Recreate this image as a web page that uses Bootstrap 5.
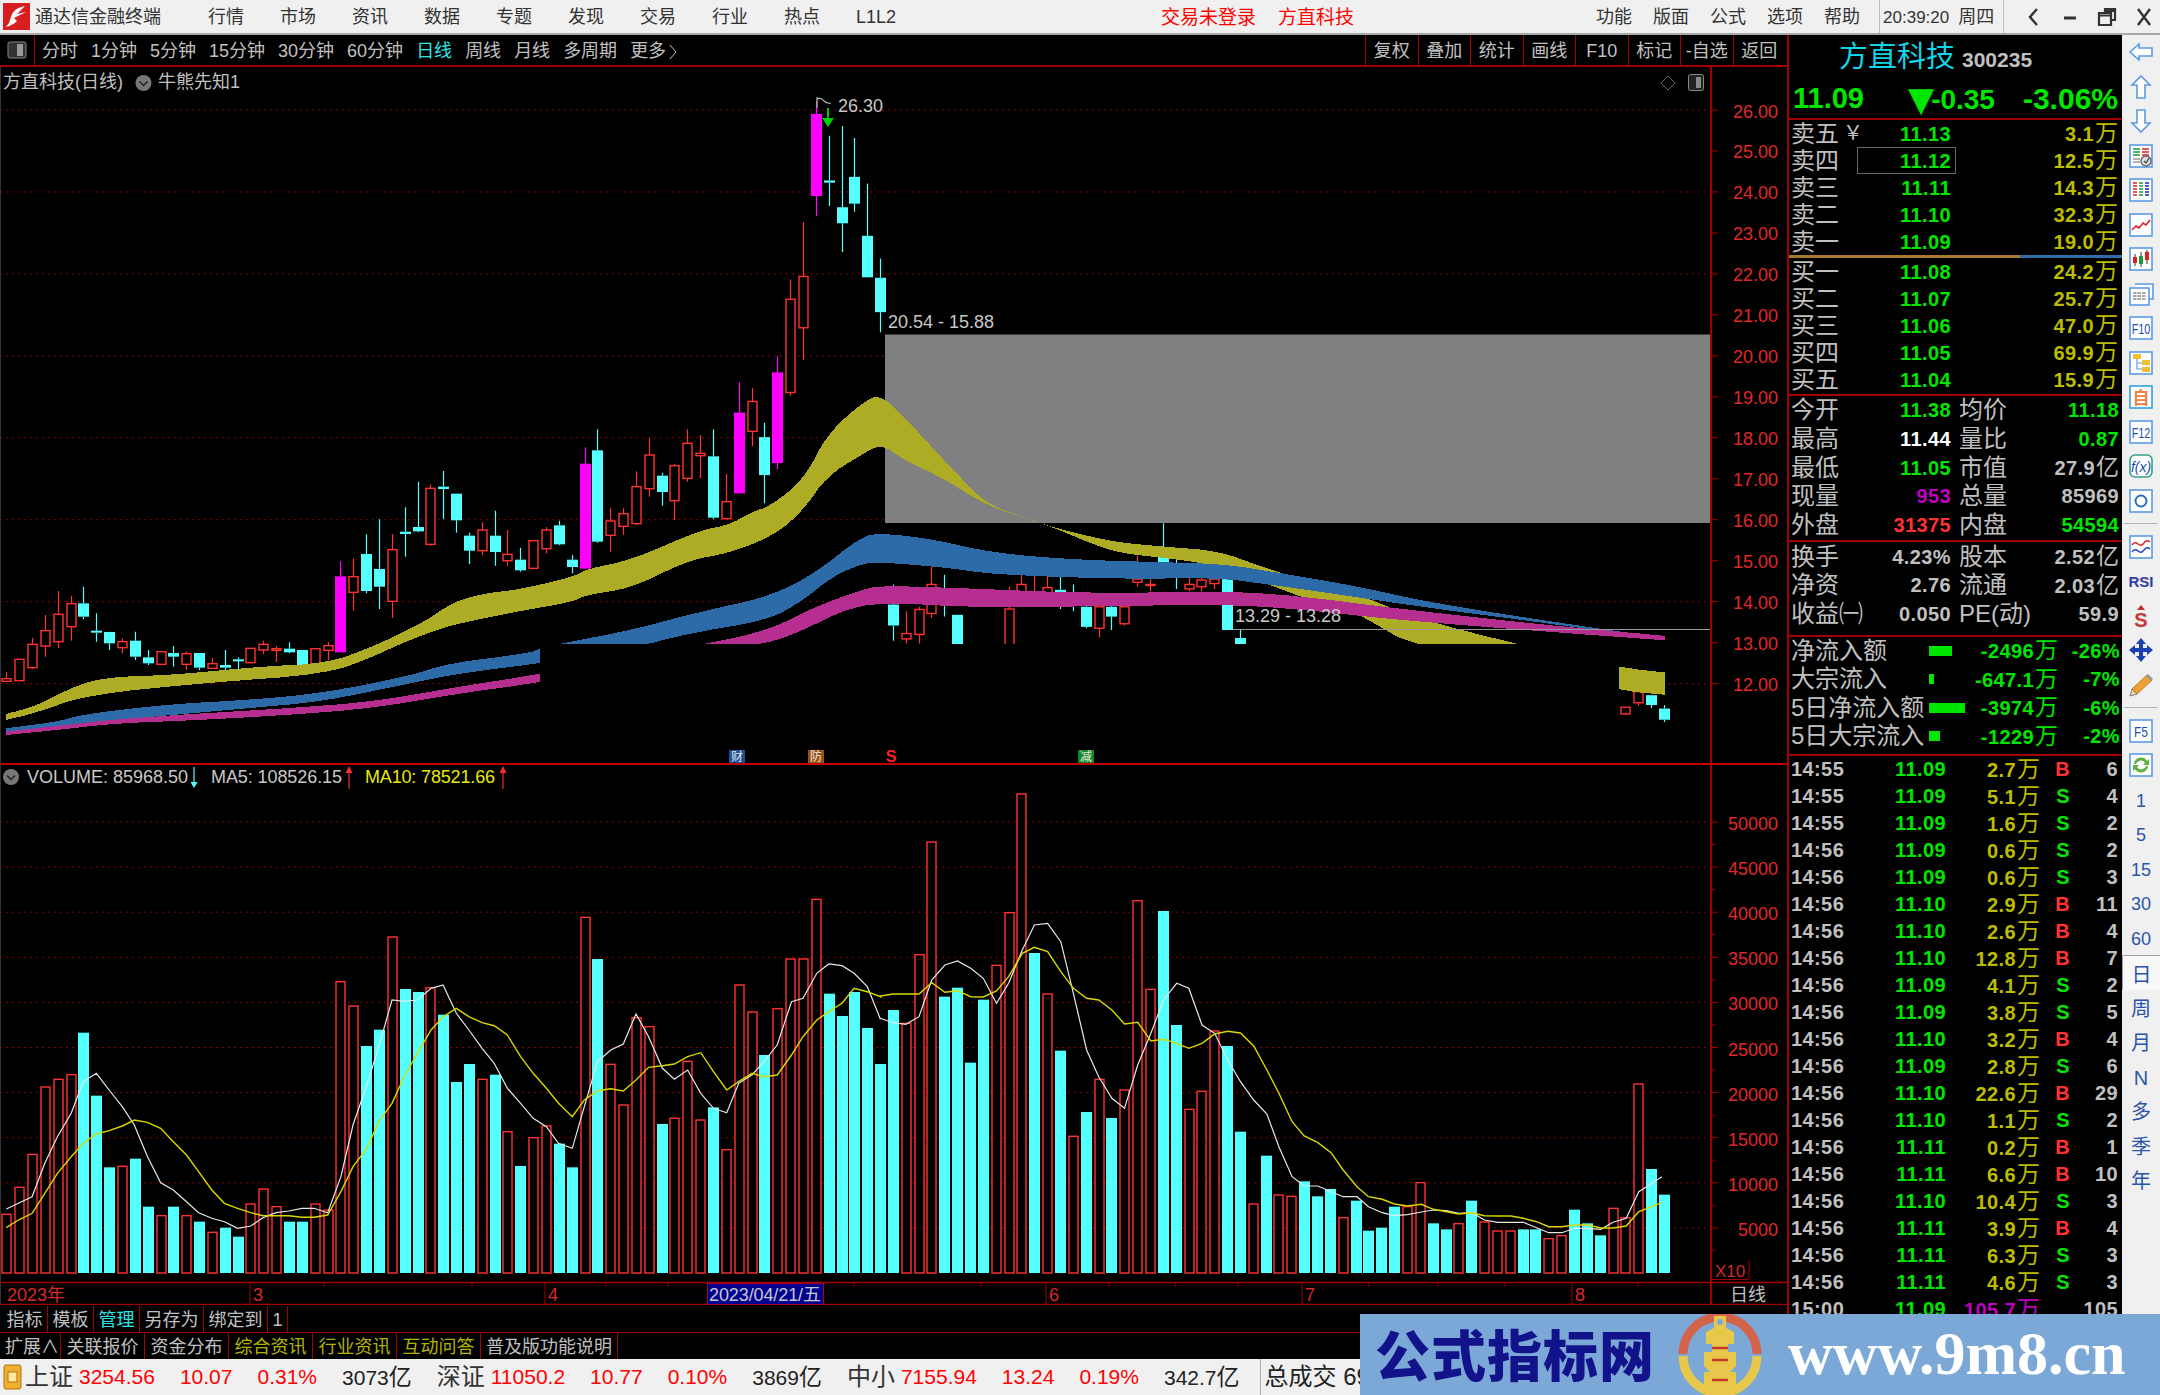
<!DOCTYPE html>
<html lang="zh-CN">
<head>
  <meta charset="UTF-8">
  <meta name="viewport" content="width=device-width, initial-scale=1">
  <title>通达信金融终端</title>
  <link href="https://cdn.jsdelivr.net/npm/bootstrap@5.3.0/dist/css/bootstrap.min.css" rel="stylesheet">
  <style>
    html, body { margin: 0; height: 1395px; width: 2160px; overflow: hidden; background: #000; }
    body, svg text { font-family: "Liberation Sans", "Noto Sans CJK SC", sans-serif; }
    .tdx-app { position: relative; width: 2160px; height: 1395px; overflow: hidden; }

    /* top title bar */
    .tdx-top { height: 35px; background: #f0f0f0; border-bottom: 2px solid #a8a8a8; font-size: 18px; color: #333; line-height: 1; }
    .tdx-top > div { padding-top: 1px; }
    .tdx-logo { margin-left: 3px; }
    .tdx-appname { margin-left: 5px; width: 126px; white-space: nowrap; }
    .tdx-menu { gap: 36px; margin-left: 47px; white-space: nowrap; }
    .tdx-menu2 { gap: 21px; margin-left: 242px; white-space: nowrap; }
    .tdx-alert { color: #f00; font-size: 19px; margin-left: 265px; gap: 22px; white-space: nowrap; }
    .tdx-clock { margin-left: 19px; border-left: 1px solid #bbb; border-right: 1px solid #bbb; width: 125px; height: 33px; padding-left: 3px; gap: 9px; white-space: nowrap; }
    .tdx-clock span:first-child { font-size: 17px; }
    .tdx-win { margin-left: 18px; gap: 15px; }

    /* main area */
    .tdx-work { height: 1360px; }
    .tdx-left { width: 1787px; height: 1324px; flex: none; }
    .tdx-tools { height: 32px; border-bottom: 2px solid #a00000; color: #c0c0c0; font-size: 18px; white-space: nowrap; }
    .tdx-tools span, .tdx-cells > div { padding-top: 3px; }
    .tdx-tabs { gap: 13px; margin-left: 7px; }
    .tdx-boxbtn { width: 35px; height: 30px; border-right: 1px solid #a00000; }
    .tdx-on { color: #2ee6e6; }
    .tdx-cells { margin-right: 2px; }
    .tdx-cells > div { width: 52.5px; height: 30px; border-left: 1px solid #a00000; }
    .tdx-chev { margin-left: 3px; }
    .tdx-chart { display: block; }
    .tdx-btnrow { height: 27px; border-bottom: 1px solid #a00000; color: #c0c0c0; font-size: 18px; padding-left: 2px; white-space: nowrap; }
    .tdx-btnrow > div { height: 26px; padding: 3px 4.5px 0; border-right: 1px solid #a00000; }
    .tdx-btnrow .tdx-c59 { width: 59px; padding-left: 3px; padding-right: 0; }
    .tdx-btnrow .tdx-c84 { width: 84px; justify-content: center; padding-left: 0; padding-right: 0; }
    .tdx-btnrow .tdx-c137 { width: 137px; justify-content: center; padding-left: 0; padding-right: 0; }
    .tdx-gap1 { margin-top: 1px; }
    .tdx-btnrow .tdx-yel { color: #b4b400; }

    /* quote panel */
    .tdx-quote { width: 335px; height: 1360px; flex: none; overflow: hidden; border-left: 2px solid #a00000; color: #c0c0c0; white-space: nowrap; line-height: 1; }
    .tdx-name { height: 44px; padding-left: 50px; gap: 7px; }
    .tdx-name b { font-weight: 400; font-size: 29px; line-height: 1; color: #10d4e8; }
    .tdx-name span { font-size: 21px; font-weight: 700; margin-top: 5px; }
    .tdx-price { height: 39px; color: #00e600; font-weight: 700; padding: 0 4px; border-bottom: 2px solid #a00000; box-sizing: content-box; }
    .tdx-price .tdx-last { font-size: 29px; width: 120px; }
    .tdx-price .tdx-chg { font-size: 28px; width: 110px; white-space: nowrap; }
    .tdx-price .tdx-tri { font-size: 34px; margin: 0 -3px 0 -5px; line-height: 1; vertical-align: -2px; font-family: "DejaVu Sans", sans-serif; }
    .tdx-price .tdx-pct { font-size: 30px; }
    .tdx-num { font-size: 20px; font-weight: 700; letter-spacing: .4px; }
    .tdx-lab { font-size: 24px; font-weight: 400; line-height: 1; }
    .tdx-wan { font-style: normal; font-size: 23px; font-weight: 400; margin-left: 1px; letter-spacing: 0; }
    .tdx-g { color: #00e600; }
    .tdx-y { color: #bcbc00; }
    .tdx-r { color: #ff3232; }
    .tdx-m { color: #c000c0; }
    .tdx-w { color: #fff; }
    .tdx-rb { height: 27px; display: grid; grid-template-columns: 58px 102px 1fr; align-items: center; padding: 0 4px 0 2px; position: relative; }
    .tdx-rb > :nth-child(2), .tdx-rb > :nth-child(3) { text-align: right; }
    .tdx-yuan { position: absolute; left: 54px; top: 3px; font-size: 20px; }
    .tdx-sel { position: absolute; left: 68px; top: 0; width: 99px; height: 27px; border: 1px solid #666; }
    .tdx-split { height: 3px; background: linear-gradient(90deg, #a87830 0, #a87830 231px, #2f6ea8 231px); }
    .tdx-hr { border-bottom: 2px solid #a00000; padding-top: 1px; }
    .tdx-hr2 { padding-top: 6px; }
    .tdx-hr3 { padding-top: 3px; }
    .tdx-rs { height: 28.7px; display: grid; grid-template-columns: 58px 102px 70px 1fr; align-items: center; padding: 0 3px 0 2px; }
    .tdx-rs > :nth-child(2), .tdx-rs > :nth-child(4) { text-align: right; }
    .tdx-rs > :nth-child(3) { padding-left: 8px; }
    .tdx-rf { height: 28.5px; display: grid; grid-template-columns: 138px 40px 89px 62px; align-items: center; padding-left: 2px; }
    .tdx-rf > :nth-child(3), .tdx-rf > :nth-child(4) { text-align: right; }
    .tdx-flowbar { display: block; height: 10px; background: #00e600; }
    .tdx-rt { height: 27px; display: grid; grid-template-columns: 52px 103px 94px 30px 48px; align-items: center; padding-left: 2px; }
    .tdx-rt > :nth-child(2), .tdx-rt > :nth-child(3), .tdx-rt > :nth-child(4), .tdx-rt > :nth-child(5) { text-align: right; }

    /* icon strip */
    .tdx-strip { width: 38px; height: 1360px; flex: none; background: #f0f0f0; color: #2a55a8; font-size: 18px; line-height: 1; }
    .tdx-ic { height: 34.5px; }
    .tdx-ic svg { display: block; }
    .tdx-it { padding-top: 2px; }
    .tdx-big { font-size: 20px; padding-top: 4px; }
    .tdx-sp { height: 11.5px; padding: 5px 2px; }
    .tdx-sp::before { content: ""; display: block; height: 1px; background: #b4b4b4; }
    .tdx-active { background: #f8f8f8; border-top: 1px solid #a0a0a0; border-left: 1px solid #a0a0a0; }

    /* bottom status bar */
    .tdx-status { position: absolute; left: 0; bottom: 0; width: 100%; height: 36px; background: #f0f0f0; color: #222; gap: 25px; padding-left: 3px; font-size: 21px; font-weight: 400; white-space: nowrap; }
    .tdx-status .tdx-sname { font-size: 24px; margin-right: -19px; color: #333; }
    .tdx-status .tdx-up { color: #f00; }
    .tdx-status em { font-style: normal; font-size: 23px; }
    .tdx-sico { margin-right: -22px; }
    .tdx-vbar { border-left: 1px solid #aaa; height: 36px; padding-left: 4px; margin-left: -5px; line-height: 36px; font-size: 24px; }

    /* watermark over the corner */
    .tdx-mark { position: absolute; right: 0; bottom: 0; width: 800px; height: 81px; background: #7ba8d6; }
    .tdx-marktxt { position: absolute; left: 15px; top: 3px; font-size: 55px; line-height: 70px; font-weight: 900; color: #12128a; letter-spacing: 1px; font-family: "Noto Sans CJK SC", sans-serif; }
    .tdx-markurl { position: absolute; left: 428px; top: 0; font-family: "Liberation Serif", serif; font-weight: 700; font-size: 62px; line-height: 78px; color: #fff; }
    .tdx-markicon { position: absolute; left: 318px; top: 0; }
  </style>
</head>
<body>
<div class="tdx-app">

  <!-- top bar -->
  <div class="tdx-top d-flex align-items-center">
    <svg class="tdx-logo" width="27" height="27" viewBox="0 0 27 27"><rect width="27" height="27" fill="#d81e1e"/><path d="M22 3 Q12 5 9 11 L6 20 L3 24 Q10 22 14 18 L11 15 L23 9 L14 11Z" fill="#fff"/></svg>
    <div class="tdx-appname">通达信金融终端</div>
    <div class="tdx-menu d-flex"><span>行情</span><span>市场</span><span>资讯</span><span>数据</span><span>专题</span><span>发现</span><span>交易</span><span>行业</span><span>热点</span><span>L1L2</span></div>
    <div class="tdx-alert d-flex"><span>交易未登录</span><span>方直科技</span></div>
    <div class="tdx-menu2 d-flex"><span>功能</span><span>版面</span><span>公式</span><span>选项</span><span>帮助</span></div>
    <div class="tdx-clock d-flex align-items-center"><span>20:39:20</span><span>周四</span></div>
    <div class="tdx-win d-flex align-items-center">
      <svg width="22" height="22" viewBox="0 0 22 22"><path d="M15 3 L8 11 L15 19" fill="none" stroke="#333" stroke-width="2.4"/></svg>
      <svg width="22" height="22" viewBox="0 0 22 22"><path d="M5 12 H17" stroke="#333" stroke-width="3"/></svg>
      <svg width="22" height="22" viewBox="0 0 22 22"><path d="M9 6 V3 H19 V14 H16 M3 7 H15 V19 H3Z M3 9.5 H15 M9 5 H19" fill="none" stroke="#333" stroke-width="2.2"/></svg>
      <svg width="22" height="22" viewBox="0 0 22 22"><path d="M5 3 L17 19 M17 3 L5 19" stroke="#333" stroke-width="2.4"/></svg>
    </div>
  </div>

  <div class="tdx-work d-flex">
    <div class="tdx-left">
      <!-- period toolbar -->
      <div class="tdx-tools d-flex align-items-center">
        <div class="tdx-boxbtn d-flex align-items-center justify-content-center">
          <svg width="20" height="18" viewBox="0 0 20 18"><rect x="1" y="1" width="18" height="16" rx="2" fill="#333" stroke="#888"/><rect x="10" y="3" width="6" height="12" fill="#999"/></svg>
        </div>
        <div class="tdx-tabs d-flex align-items-center">
          <span>分时</span><span>1分钟</span><span>5分钟</span><span>15分钟</span><span>30分钟</span><span>60分钟</span><span class="tdx-on">日线</span><span>周线</span><span>月线</span><span>多周期</span><span class="d-flex align-items-center">更多<svg class="tdx-chev" width="8" height="16" viewBox="0 0 8 16"><path d="M1 1 L7 8 L1 15" fill="none" stroke="#c0c0c0"/></svg></span>
        </div>
        <div class="tdx-cells d-flex ms-auto">
          <div class="d-flex align-items-center justify-content-center">复权</div>
          <div class="d-flex align-items-center justify-content-center">叠加</div>
          <div class="d-flex align-items-center justify-content-center">统计</div>
          <div class="d-flex align-items-center justify-content-center">画线</div>
          <div class="d-flex align-items-center justify-content-center">F10</div>
          <div class="d-flex align-items-center justify-content-center">标记</div>
          <div class="d-flex align-items-center justify-content-center">-自选</div>
          <div class="d-flex align-items-center justify-content-center">返回</div>
        </div>
      </div>

      <!-- price, volume and date canvas, filled in by the script below -->
      <svg id="chart" class="tdx-chart" width="1787" height="1238" viewBox="0 67 1787 1238" xmlns="http://www.w3.org/2000/svg"></svg>

      <div class="tdx-btnrow tdx-gap1 d-flex align-items-center">
        <div class="d-flex align-items-center">指标</div>
        <div class="d-flex align-items-center">模板</div>
        <div class="d-flex align-items-center tdx-on">管理</div>
        <div class="d-flex align-items-center">另存为</div>
        <div class="d-flex align-items-center">绑定到</div>
        <div class="d-flex align-items-center">1</div>
      </div>
      <div class="tdx-btnrow d-flex align-items-center">
        <div class="d-flex align-items-center tdx-c59">扩展∧</div>
        <div class="d-flex align-items-center tdx-c84">关联报价</div>
        <div class="d-flex align-items-center tdx-c84">资金分布</div>
        <div class="d-flex align-items-center tdx-c84 tdx-yel">综合资讯</div>
        <div class="d-flex align-items-center tdx-c84 tdx-yel">行业资讯</div>
        <div class="d-flex align-items-center tdx-c84 tdx-yel">互动问答</div>
        <div class="d-flex align-items-center tdx-c137">普及版功能说明</div>
      </div>
    </div>

    <!-- quote panel -->
    <div class="tdx-quote">
      <div class="tdx-name d-flex align-items-center"><b>方直科技</b><span>300235</span></div>
      <div class="tdx-price d-flex align-items-center">
        <span class="tdx-last">11.09</span><span class="tdx-chg"><span class="tdx-tri">▼</span>-0.35</span><span class="tdx-pct ms-auto">-3.06%</span>
      </div>

      <div class="tdx-rb"><span class="tdx-lab">卖五</span><span class="tdx-num tdx-g">11.13</span><span class="tdx-num tdx-y">3.1<i class="tdx-wan">万</i></span><span class="tdx-yuan">￥</span></div>
      <div class="tdx-rb"><span class="tdx-lab">卖四</span><span class="tdx-num tdx-g">11.12</span><span class="tdx-num tdx-y">12.5<i class="tdx-wan">万</i></span><span class="tdx-sel"></span></div>
      <div class="tdx-rb"><span class="tdx-lab">卖三</span><span class="tdx-num tdx-g">11.11</span><span class="tdx-num tdx-y">14.3<i class="tdx-wan">万</i></span></div>
      <div class="tdx-rb"><span class="tdx-lab">卖二</span><span class="tdx-num tdx-g">11.10</span><span class="tdx-num tdx-y">32.3<i class="tdx-wan">万</i></span></div>
      <div class="tdx-rb"><span class="tdx-lab">卖一</span><span class="tdx-num tdx-g">11.09</span><span class="tdx-num tdx-y">19.0<i class="tdx-wan">万</i></span></div>
      <div class="tdx-split"></div>
      <div class="tdx-rb"><span class="tdx-lab">买一</span><span class="tdx-num tdx-g">11.08</span><span class="tdx-num tdx-y">24.2<i class="tdx-wan">万</i></span></div>
      <div class="tdx-rb"><span class="tdx-lab">买二</span><span class="tdx-num tdx-g">11.07</span><span class="tdx-num tdx-y">25.7<i class="tdx-wan">万</i></span></div>
      <div class="tdx-rb"><span class="tdx-lab">买三</span><span class="tdx-num tdx-g">11.06</span><span class="tdx-num tdx-y">47.0<i class="tdx-wan">万</i></span></div>
      <div class="tdx-rb"><span class="tdx-lab">买四</span><span class="tdx-num tdx-g">11.05</span><span class="tdx-num tdx-y">69.9<i class="tdx-wan">万</i></span></div>
      <div class="tdx-rb"><span class="tdx-lab">买五</span><span class="tdx-num tdx-g">11.04</span><span class="tdx-num tdx-y">15.9<i class="tdx-wan">万</i></span></div>
      <div class="tdx-hr"></div>

      <div class="tdx-rs"><span class="tdx-lab">今开</span><span class="tdx-num tdx-g">11.38</span><span class="tdx-lab">均价</span><span class="tdx-num tdx-g">11.18</span></div>
      <div class="tdx-rs"><span class="tdx-lab">最高</span><span class="tdx-num tdx-w">11.44</span><span class="tdx-lab">量比</span><span class="tdx-num tdx-g">0.87</span></div>
      <div class="tdx-rs"><span class="tdx-lab">最低</span><span class="tdx-num tdx-g">11.05</span><span class="tdx-lab">市值</span><span class="tdx-num">27.9<i class="tdx-wan">亿</i></span></div>
      <div class="tdx-rs"><span class="tdx-lab">现量</span><span class="tdx-num tdx-m">953</span><span class="tdx-lab">总量</span><span class="tdx-num">85969</span></div>
      <div class="tdx-rs"><span class="tdx-lab">外盘</span><span class="tdx-num tdx-r">31375</span><span class="tdx-lab">内盘</span><span class="tdx-num tdx-g">54594</span></div>
      <div class="tdx-hr"></div>
      <div class="tdx-rs"><span class="tdx-lab">换手</span><span class="tdx-num">4.23%</span><span class="tdx-lab">股本</span><span class="tdx-num">2.52<i class="tdx-wan">亿</i></span></div>
      <div class="tdx-rs"><span class="tdx-lab">净资</span><span class="tdx-num">2.76</span><span class="tdx-lab">流通</span><span class="tdx-num">2.03<i class="tdx-wan">亿</i></span></div>
      <div class="tdx-rs"><span class="tdx-lab">收益㈠</span><span class="tdx-num">0.050</span><span class="tdx-lab">PE(动)</span><span class="tdx-num">59.9</span></div>
      <div class="tdx-hr tdx-hr2"></div>

      <div class="tdx-rf"><span class="tdx-lab">净流入额</span><span><span class="tdx-flowbar" style="width:23px"></span></span><span class="tdx-num tdx-g">-2496<i class="tdx-wan">万</i></span><span class="tdx-num tdx-g">-26%</span></div>
      <div class="tdx-rf"><span class="tdx-lab">大宗流入</span><span><span class="tdx-flowbar" style="width:5px"></span></span><span class="tdx-num tdx-g">-647.1<i class="tdx-wan">万</i></span><span class="tdx-num tdx-g">-7%</span></div>
      <div class="tdx-rf"><span class="tdx-lab">5日净流入额</span><span><span class="tdx-flowbar" style="width:36px"></span></span><span class="tdx-num tdx-g">-3974<i class="tdx-wan">万</i></span><span class="tdx-num tdx-g">-6%</span></div>
      <div class="tdx-rf"><span class="tdx-lab">5日大宗流入</span><span><span class="tdx-flowbar" style="width:11px"></span></span><span class="tdx-num tdx-g">-1229<i class="tdx-wan">万</i></span><span class="tdx-num tdx-g">-2%</span></div>
      <div class="tdx-hr tdx-hr3"></div>

      <div class="tdx-rt tdx-num"><span>14:55</span><span class="tdx-g">11.09</span><span class="tdx-y">2.7<i class="tdx-wan">万</i></span><span class="tdx-r">B</span><span>6</span></div>
      <div class="tdx-rt tdx-num"><span>14:55</span><span class="tdx-g">11.09</span><span class="tdx-y">5.1<i class="tdx-wan">万</i></span><span class="tdx-g">S</span><span>4</span></div>
      <div class="tdx-rt tdx-num"><span>14:55</span><span class="tdx-g">11.09</span><span class="tdx-y">1.6<i class="tdx-wan">万</i></span><span class="tdx-g">S</span><span>2</span></div>
      <div class="tdx-rt tdx-num"><span>14:56</span><span class="tdx-g">11.09</span><span class="tdx-y">0.6<i class="tdx-wan">万</i></span><span class="tdx-g">S</span><span>2</span></div>
      <div class="tdx-rt tdx-num"><span>14:56</span><span class="tdx-g">11.09</span><span class="tdx-y">0.6<i class="tdx-wan">万</i></span><span class="tdx-g">S</span><span>3</span></div>
      <div class="tdx-rt tdx-num"><span>14:56</span><span class="tdx-g">11.10</span><span class="tdx-y">2.9<i class="tdx-wan">万</i></span><span class="tdx-r">B</span><span>11</span></div>
      <div class="tdx-rt tdx-num"><span>14:56</span><span class="tdx-g">11.10</span><span class="tdx-y">2.6<i class="tdx-wan">万</i></span><span class="tdx-r">B</span><span>4</span></div>
      <div class="tdx-rt tdx-num"><span>14:56</span><span class="tdx-g">11.10</span><span class="tdx-y">12.8<i class="tdx-wan">万</i></span><span class="tdx-r">B</span><span>7</span></div>
      <div class="tdx-rt tdx-num"><span>14:56</span><span class="tdx-g">11.09</span><span class="tdx-y">4.1<i class="tdx-wan">万</i></span><span class="tdx-g">S</span><span>2</span></div>
      <div class="tdx-rt tdx-num"><span>14:56</span><span class="tdx-g">11.09</span><span class="tdx-y">3.8<i class="tdx-wan">万</i></span><span class="tdx-g">S</span><span>5</span></div>
      <div class="tdx-rt tdx-num"><span>14:56</span><span class="tdx-g">11.10</span><span class="tdx-y">3.2<i class="tdx-wan">万</i></span><span class="tdx-r">B</span><span>4</span></div>
      <div class="tdx-rt tdx-num"><span>14:56</span><span class="tdx-g">11.09</span><span class="tdx-y">2.8<i class="tdx-wan">万</i></span><span class="tdx-g">S</span><span>6</span></div>
      <div class="tdx-rt tdx-num"><span>14:56</span><span class="tdx-g">11.10</span><span class="tdx-y">22.6<i class="tdx-wan">万</i></span><span class="tdx-r">B</span><span>29</span></div>
      <div class="tdx-rt tdx-num"><span>14:56</span><span class="tdx-g">11.10</span><span class="tdx-y">1.1<i class="tdx-wan">万</i></span><span class="tdx-g">S</span><span>2</span></div>
      <div class="tdx-rt tdx-num"><span>14:56</span><span class="tdx-g">11.11</span><span class="tdx-y">0.2<i class="tdx-wan">万</i></span><span class="tdx-r">B</span><span>1</span></div>
      <div class="tdx-rt tdx-num"><span>14:56</span><span class="tdx-g">11.11</span><span class="tdx-y">6.6<i class="tdx-wan">万</i></span><span class="tdx-r">B</span><span>10</span></div>
      <div class="tdx-rt tdx-num"><span>14:56</span><span class="tdx-g">11.10</span><span class="tdx-y">10.4<i class="tdx-wan">万</i></span><span class="tdx-g">S</span><span>3</span></div>
      <div class="tdx-rt tdx-num"><span>14:56</span><span class="tdx-g">11.11</span><span class="tdx-y">3.9<i class="tdx-wan">万</i></span><span class="tdx-r">B</span><span>4</span></div>
      <div class="tdx-rt tdx-num"><span>14:56</span><span class="tdx-g">11.11</span><span class="tdx-y">6.3<i class="tdx-wan">万</i></span><span class="tdx-g">S</span><span>3</span></div>
      <div class="tdx-rt tdx-num"><span>14:56</span><span class="tdx-g">11.11</span><span class="tdx-y">4.6<i class="tdx-wan">万</i></span><span class="tdx-g">S</span><span>3</span></div>
      <div class="tdx-rt tdx-num"><span>15:00</span><span class="tdx-g">11.09</span><span class="tdx-m">105.7<i class="tdx-wan">万</i></span><span></span><span>105</span></div>
    </div>

    <!-- right icon strip -->
    <div class="tdx-strip d-flex flex-column">
      <div class="tdx-ic d-flex align-items-center justify-content-center"><svg width="28" height="28" viewBox="0 0 28 28"><path d="M3 14 L12 6 V10 H25 V18 H12 V22Z" fill="#fff" stroke="#5b9be8" stroke-width="1.6"/></svg></div>
      <div class="tdx-ic d-flex align-items-center justify-content-center"><svg width="28" height="28" viewBox="0 0 28 28"><path d="M14 3 L23 12 H18 V25 H10 V12 H5Z" fill="#fff" stroke="#5b9be8" stroke-width="1.6"/></svg></div>
      <div class="tdx-ic d-flex align-items-center justify-content-center"><svg width="28" height="28" viewBox="0 0 28 28"><path d="M14 25 L23 16 H18 V3 H10 V16 H5Z" fill="#fff" stroke="#5b9be8" stroke-width="1.6"/></svg></div>
      <div class="tdx-ic d-flex align-items-center justify-content-center"><svg width="28" height="28" viewBox="0 0 28 28"><rect x="3" y="3" width="22" height="22" fill="#fff" stroke="#5b9be8" stroke-width="1.6"/><path d="M6 7 H13 M6 10 H13 M6 13 H13" stroke="#1a9a3a" stroke-width="1.6"/><path d="M15 7 H22 M15 10 H22 M15 13 H22" stroke="#e02020" stroke-width="1.6"/><path d="M6 17 H13 M6 20 H13" stroke="#999" stroke-width="1.6"/><circle cx="19" cy="19" r="5" fill="#ddd" stroke="#666" stroke-width="1.4"/><path d="M17 19 L19 21 L22 16" fill="none" stroke="#444" stroke-width="1.2"/></svg></div>
      <div class="tdx-ic d-flex align-items-center justify-content-center"><svg width="28" height="28" viewBox="0 0 28 28"><rect x="3" y="3" width="22" height="22" fill="#fff" stroke="#5b9be8" stroke-width="1.6"/><path d="M6 7 H10 M6 10 H10 M6 13 H10 M6 16 H10 M6 19 H10" stroke="#e02020" stroke-width="1.6"/><path d="M12 7 H16 M12 10 H16 M12 13 H16 M12 16 H16 M12 19 H16" stroke="#1a9a3a" stroke-width="1.6"/><path d="M18 7 H22 M18 10 H22 M18 13 H22 M18 16 H22 M18 19 H22" stroke="#2020d0" stroke-width="1.6"/></svg></div>
      <div class="tdx-ic d-flex align-items-center justify-content-center"><svg width="28" height="28" viewBox="0 0 28 28"><rect x="3" y="3" width="22" height="22" fill="#fff" stroke="#5b9be8" stroke-width="1.6"/><path d="M5 19 L9 15 L12 17 L16 12 L19 14 L23 9" fill="none" stroke="#e02020" stroke-width="1.6"/></svg></div>
      <div class="tdx-ic d-flex align-items-center justify-content-center"><svg width="28" height="28" viewBox="0 0 28 28"><rect x="3" y="3" width="22" height="22" fill="#fff" stroke="#5b9be8" stroke-width="1.6"/><path d="M8 9 V21 M14 7 V22 M20 5 V19" stroke="#333" stroke-width="1"/><rect x="6" y="12" width="4" height="6" fill="#e02020"/><rect x="12" y="11" width="4" height="8" fill="#1a9a3a"/><rect x="18" y="7" width="4" height="8" fill="#e02020"/></svg></div>
      <div class="tdx-ic d-flex align-items-center justify-content-center"><svg width="28" height="28" viewBox="0 0 28 28"><path d="M8 4 H26 V19 H22" fill="#fff" stroke="#5b9be8" stroke-width="1.6"/><rect x="3" y="8" width="19" height="17" fill="#fff" stroke="#5b9be8" stroke-width="1.6"/><path d="M6 13 H19 M6 16 H19 M6 19 H19" stroke="#888" stroke-width="1.6" stroke-dasharray="3.5 1"/></svg></div>
      <div class="tdx-ic d-flex align-items-center justify-content-center"><svg width="28" height="28" viewBox="0 0 28 28"><rect x="3" y="3" width="22" height="22" fill="#fff" stroke="#5b9be8" stroke-width="1.6"/><text transform="translate(14 20) scale(.72 1)" text-anchor="middle" font-size="15" fill="#2050b0">F10</text></svg></div>
      <div class="tdx-ic d-flex align-items-center justify-content-center"><svg width="28" height="28" viewBox="0 0 28 28"><rect x="3" y="3" width="22" height="22" fill="#fff" stroke="#5b9be8" stroke-width="1.6"/><path d="M10 9 V20 H15 M10 14 H15" fill="none" stroke="#5b9be8" stroke-width="1.2"/><rect x="6" y="5" width="8" height="5" fill="#f0c030"/><rect x="15" y="11" width="8" height="5" fill="#f0c030"/><rect x="15" y="18" width="8" height="5" fill="#f0c030"/></svg></div>
      <div class="tdx-ic d-flex align-items-center justify-content-center"><svg width="28" height="28" viewBox="0 0 28 28"><rect x="3" y="3" width="22" height="22" fill="#fff" stroke="#30a0e0" stroke-width="1.6"/><text x="14" y="21" text-anchor="middle" font-size="17" font-weight="700" fill="#f08040">自</text></svg></div>
      <div class="tdx-ic d-flex align-items-center justify-content-center"><svg width="28" height="28" viewBox="0 0 28 28"><rect x="3" y="3" width="22" height="22" fill="#fff" stroke="#5b9be8" stroke-width="1.6"/><text transform="translate(14 20) scale(.72 1)" text-anchor="middle" font-size="15" fill="#2050b0">F12</text></svg></div>
      <div class="tdx-ic d-flex align-items-center justify-content-center"><svg width="28" height="28" viewBox="0 0 28 28"><rect x="3" y="3" width="22" height="22" rx="5" fill="#fff" stroke="#30a090" stroke-width="1.6"/><text x="14" y="20" text-anchor="middle" font-size="14" font-style="italic" fill="#2050b0">f(x)</text></svg></div>
      <div class="tdx-ic d-flex align-items-center justify-content-center"><svg width="28" height="28" viewBox="0 0 28 28"><rect x="3" y="3" width="22" height="22" fill="#fff" stroke="#5b9be8" stroke-width="1.6"/><circle cx="14" cy="14" r="5.5" fill="none" stroke="#2a70c0" stroke-width="2"/></svg></div>
      <div class="tdx-sp"></div>
      <div class="tdx-ic d-flex align-items-center justify-content-center"><svg width="28" height="28" viewBox="0 0 28 28"><rect x="3" y="3" width="22" height="22" fill="#fff" stroke="#5b9be8" stroke-width="1.6"/><path d="M5 12 Q8 8 11 11 T17 10 T23 9" fill="none" stroke="#e02020" stroke-width="1.4"/><path d="M5 19 Q8 15 11 18 T17 17 T23 16" fill="none" stroke="#2040d0" stroke-width="1.4"/></svg></div>
      <div class="tdx-ic d-flex align-items-center justify-content-center"><svg width="28" height="28" viewBox="0 0 28 28"><text x="14" y="20" text-anchor="middle" font-size="15" font-weight="700" fill="#2a40a8">RSI</text><path d="M4 12 H24" stroke="#d04040" stroke-width=".8" opacity=".5"/></svg></div>
      <div class="tdx-ic d-flex align-items-center justify-content-center"><svg width="28" height="28" viewBox="0 0 28 28"><path d="M14 3 L18 8 H10Z" fill="#c03030"/><text x="14" y="25" text-anchor="middle" font-size="20" font-weight="700" fill="#d03030" stroke="#999" stroke-width=".3">S</text></svg></div>
      <div class="tdx-ic d-flex align-items-center justify-content-center"><svg width="28" height="28" viewBox="0 0 28 28"><path d="M14 2 L19 8 H16 V12 H20 V9 L26 14 L20 19 V16 H16 V20 H19 L14 26 L9 20 H12 V16 H8 V19 L2 14 L8 9 V12 H12 V8 H9Z" fill="#1a3fb0"/></svg></div>
      <div class="tdx-ic d-flex align-items-center justify-content-center"><svg width="28" height="28" viewBox="0 0 28 28"><path d="M20 4 L25 9 L10 23 L5 18Z" fill="#f0a030" stroke="#a06a10" stroke-width=".8"/><path d="M5 18 L3 25 L10 23Z" fill="#e8d8b0" stroke="#666" stroke-width=".8"/><path d="M20 4 L25 9" stroke="#999" stroke-width="3"/></svg></div>
      <div class="tdx-sp"></div>
      <div class="tdx-ic d-flex align-items-center justify-content-center"><svg width="28" height="28" viewBox="0 0 28 28"><rect x="3" y="3" width="22" height="22" fill="#fff" stroke="#5b9be8" stroke-width="1.6"/><text transform="translate(14 20) scale(.8 1)" text-anchor="middle" font-size="15" fill="#2050b0">F5</text></svg></div>
      <div class="tdx-ic d-flex align-items-center justify-content-center"><svg width="28" height="28" viewBox="0 0 28 28"><rect x="3" y="3" width="22" height="22" fill="#fff" stroke="#5b9be8" stroke-width="1.6"/><path d="M7 13 A7 7 0 0 1 20 10 L22 8 V14 H16 L18 12 A5 5 0 0 0 9 13Z M21 15 A7 7 0 0 1 8 18 L6 20 V14 H12 L10 16 A5 5 0 0 0 19 15Z" fill="#60b040"/></svg></div>
      <div class="tdx-ic tdx-it d-flex align-items-center justify-content-center">1</div>
      <div class="tdx-ic tdx-it d-flex align-items-center justify-content-center">5</div>
      <div class="tdx-ic tdx-it d-flex align-items-center justify-content-center">15</div>
      <div class="tdx-ic tdx-it d-flex align-items-center justify-content-center">30</div>
      <div class="tdx-ic tdx-it d-flex align-items-center justify-content-center">60</div>
      <div class="tdx-ic tdx-big tdx-active d-flex align-items-center justify-content-center">日</div>
      <div class="tdx-ic tdx-big d-flex align-items-center justify-content-center">周</div>
      <div class="tdx-ic tdx-big d-flex align-items-center justify-content-center">月</div>
      <div class="tdx-ic tdx-big d-flex align-items-center justify-content-center">N</div>
      <div class="tdx-ic tdx-big d-flex align-items-center justify-content-center">多</div>
      <div class="tdx-ic tdx-big d-flex align-items-center justify-content-center">季</div>
      <div class="tdx-ic tdx-big d-flex align-items-center justify-content-center">年</div>
    </div>
  </div>

  <!-- status bar -->
  <div class="tdx-status d-flex align-items-center">
    <svg class="tdx-sico" width="19" height="26" viewBox="0 0 19 26"><rect x="1" y="1" width="17" height="24" rx="2" fill="#f0b030" stroke="#b07010"/><rect x="5" y="8" width="9" height="10" fill="#ffe8a0" stroke="#b07010"/></svg>
    <span class="tdx-sname">上证</span><span class="tdx-up">3254.56</span><span class="tdx-up">10.07</span><span class="tdx-up">0.31%</span><span>3073<em>亿</em></span>
    <span class="tdx-sname">深证</span><span class="tdx-up">11050.2</span><span class="tdx-up">10.77</span><span class="tdx-up">0.10%</span><span>3869<em>亿</em></span>
    <span class="tdx-sname">中小</span><span class="tdx-up">7155.94</span><span class="tdx-up">13.24</span><span class="tdx-up">0.19%</span><span>342.7<em>亿</em></span>
    <span class="tdx-vbar">总成交 6904亿</span>
  </div>

  <!-- watermark -->
  <div class="tdx-mark">
    <div class="tdx-marktxt">公式指标网</div>
    <svg class="tdx-markicon" width="84" height="81" viewBox="0 0 84 81">
      <path d="M5 40 A37 37 0 0 1 79 40" fill="none" stroke="#d4634c" stroke-width="9"/>
      <path d="M79 42 A37 37 0 0 1 5 42" fill="none" stroke="#e8c84a" stroke-width="9"/>
      <path d="M36 2 H48 V14 L56 18 V30 H50 V38 H58 V52 L52 58 H58 V78 H26 V58 H32 L26 52 V38 H34 V30 H28 V18 L36 14Z" fill="#e8c84a"/>
      <circle cx="42" cy="8" r="3" fill="#7ba8d6"/>
      <path d="M34 34 H50 M34 46 H50 M34 66 H50" stroke="#c23a2a" stroke-width="2.5"/>
    </svg>
    <div class="tdx-markurl">www.9m8.cn</div>
  </div>
</div>

<script>
  // everything in the svg uses page coordinates (viewBox starts at y=67)
  const svgEl = document.getElementById('chart');
  let out = '';

  const RED = '#ff3232', CYAN = '#54ffff', MAG = '#ff00ff', AX = '#a00000', DOT = '#8a0000';
  const barX = i => 6.3 + 12.85 * i;
  const priceY = p => 110 + (26 - p) * 40.97;
  // crops the numbers were read from
  const z8 = v => 400 + v / 3;
  const z9 = v => 80 + v / 2.24;
  const z10 = v => 760 + v / 3;

  function text(x, y, s, col, size, anchor) {
    return `<text x="${x}" y="${y}" fill="${col}" font-size="${size || 18}" text-anchor="${anchor || 'start'}" dominant-baseline="central">${s}</text>`;
  }
  function candle(i, type, hi, top, bot, lo) {
    const x = Math.round(barX(i));
    const col = type === 'r' ? RED : type === 'c' ? CYAN : MAG;
    let s = `<path d="M${x + .5} ${hi} V${top} M${x + .5} ${bot} V${lo}" stroke="${col}" stroke-width="1.2"/>`;
    if (type === 'r') s += `<rect x="${x - 4}" y="${top}" width="9" height="${Math.max(bot - top, 1)}" fill="#000" stroke="${col}" stroke-width="1.4"/>`;
    else s += `<rect x="${x - 5}" y="${top}" width="11" height="${Math.max(bot - top, 2)}" fill="${col}"/>`;
    return s;
  }

  // [type, high, top, bottom, low] read from the left half of the chart
  const leftCandles = [
    ['r',816,836,844,844],['r',778,778,842,842],['r',713,733,803,806],['r',645,692,738,770],['r',573,643,725,745],
    ['r',587,611,680,722],['c',560,610,650,658],['c',640,692,698,725],['c',695,696,730,750],['r',715,725,743,760],
    ['c',695,722,770,780],['c',750,772,790,795],['r',755,755,793,795],['c',738,759,770,800],['r',755,761,793,810],
    ['c',759,759,803,810],['r',775,791,805,806],['c',750,795,803,810],['c',772,778,782,808],['r',745,745,788,790],
    ['r',722,733,750,762],['r',738,746,751,786],['c',727,746,757,760],['c',750,750,795,795],['r',746,746,795,795],
    ['r',727,737,751,780],['m',484,529,757,757],['r',475,530,577,632],['c',403,462,573,580],['c',358,507,560,627],
    ['r',403,449,604,654],['c',322,395,402,470],['c',245,381,394,397],['r',253,265,433,438],['c',213,260,267,358],
    ['c',281,281,361,398],['c',398,407,452,492],['r',367,390,452,465],['c',332,407,456,497],['r',390,463,482,497],
    ['c',443,479,511,515],['r',422,422,505,508],['r',382,390,446,460],['c',362,376,433,436],['c',465,479,501,520],
    ['m',142,191,506,506],['c',88,151,425,428],['r',325,363,406,455],['r',325,341,379,405],['r',214,260,371,375],
    ['r',115,165,266,290],['c',218,227,276,317],['r',192,197,302,360],['r',88,130,235,245],['r',105,160,167,235],
    ['c',88,169,353,358],['r',222,305,356,358]
  ];
  // [index, type, high, top, bottom, low] read from the right half
  const rightCandles = [
    [57,'m',677,745,926,926],[58,'r',690,720,787,820],[59,'c',768,800,885,948],[60,'m',618,655,858,872],[61,'r',447,491,700,707],
    [62,'r',318,440,555,628],[63,'m',47,76,260,305],[64,'c',125,225,230,282],[65,'c',103,285,321,385],[66,'c',130,217,277,295],
    [67,'c',232,349,442,442],[68,'c',400,443,520,565],[69,'c',1130,1175,1222,1256],[70,'r',1190,1240,1252,1262],[71,'r',1180,1186,1242,1262],
    [72,'r',1090,1130,1195,1205],[73,'c',1108,1170,1172,1202],[74,'c',1198,1198,1270,1270],[78,'r',1135,1185,1270,1270],[79,'r',1108,1130,1150,1150],
    [80,'r',1110,1150,1151,1180],[81,'r',1110,1137,1150,1150],[82,'c',1110,1142,1150,1185],[83,'c',1130,1150,1152,1190],[84,'c',1150,1180,1225,1228],
    [85,'r',1150,1180,1228,1248],[86,'c',1150,1180,1202,1232],[87,'r',1150,1180,1218,1222],[88,'r',1065,1118,1125,1135],[89,'r',1110,1130,1131,1145],
    [90,'c',993,1065,1080,1090],[91,'c',1075,1100,1102,1140],[92,'r',1100,1130,1140,1145],[93,'r',1100,1120,1135,1145],[94,'r',1090,1118,1128,1140],
    [95,'c',1118,1118,1232,1232],[96,'c',1232,1250,1275,1275],[126,'r',1405,1405,1420,1422],[127,'r',1370,1370,1395,1402],[128,'c',1378,1378,1400,1407],
    [129,'c',1400,1408,1433,1438]
  ];

  // gridlines and axis of the price pane
  for (let p = 12; p <= 26; p += 2) out += `<path d="M0 ${priceY(p)} H1711" stroke="${DOT}" stroke-dasharray="2 4"/>`;
  leftCandles.forEach((c, i) => { out += candle(i, c[0], z8(c[1]), z8(c[2]), z8(c[3]), z8(c[4])); });
  rightCandles.forEach(c => { out += candle(c[0], c[1], z9(c[2]), z9(c[3]), z9(c[4]), z9(c[5])); });

  // gap box
  out += `<rect x="885" y="334.5" width="826" height="188.5" fill="#808080"/>`;

  // rounds the corners of an edge, the ribbons are drawn smooth in the original
  function chaikin(pts) {
    const res = [pts[0]];
    for (let i = 0; i < pts.length - 1; i++) {
      const a = pts[i], b = pts[i + 1];
      res.push([a[0] * .75 + b[0] * .25, a[1] * .75 + b[1] * .25], [a[0] * .25 + b[0] * .75, a[1] * .25 + b[1] * .75]);
    }
    res.push(pts[pts.length - 1]);
    return res;
  }
  // moving average ribbons: top edge then bottom edge, from the two crops
  function ribbon(topL, topR, botL, botR, col) {
    const l = a => a.map(p => [p[0] * 900 / 1568, z8(p[1])]);
    const r = a => a.map(p => [700 + p[0] / 1.4255, z9(p[1])]);
    const top = chaikin(chaikin(l(topL).concat(r(topR))));
    const bot = chaikin(chaikin(l(botL).concat(r(botR))));
    const pts = top.concat(bot.reverse());
    return `<polygon points="${pts.map(p => p[0].toFixed(1) + ',' + p[1].toFixed(1)).join(' ')}" fill="${col}" shape-rendering="crispEdges"/>`;
  }
  out += ribbon(
    [[10,942],[60,920],[140,850],[200,830],[300,825],[450,800],[570,790],[650,740],[740,665],[790,605],[850,578],[900,570],[1000,530],[1020,508],[1100,480],[1220,390],[1270,375],[1310,335],[1340,320],[1400,240],[1440,105],[1500,10]],
    [[258,703],[300,770],[335,830],[380,905],[410,950],[470,985],[510,1005],[590,1035],[660,1045],[740,1055],[800,1090],[850,1115],[900,1130],[950,1160],[1020,1205],[1160,1262],[1311,1316],[1375,1327]],
    [[10,960],[60,940],[150,885],[350,850],[570,822],[650,770],[700,730],[760,690],[800,670],[900,635],[1000,605],[1020,585],[1100,565],[1200,480],[1270,460],[1350,405],[1400,330],[1440,230],[1500,165]],
    [[258,815],[290,850],[330,880],[360,905],[400,945],[440,970],[500,1000],[560,1040],[600,1060],[660,1070],[730,1085],[780,1110],[810,1130],[870,1165],[930,1190],[970,1225],[1010,1262],[1311,1368],[1375,1377]],
    '#adac24');
  out += ribbon(
    [[10,985],[100,965],[140,945],[230,925],[320,910],[430,900],[560,880],[720,825],[780,790],[920,760],[941,745],[980,730],[1100,690],[1220,635],[1340,590],[1420,520],[1500,410]],
    [[258,1015],[330,1028],[420,1060],[540,1075],[660,1080],[750,1085],[830,1105],[940,1135],[1040,1170],[1200,1210],[1375,1250]],
    [[10,1000],[100,980],[200,960],[300,945],[430,925],[560,905],[700,855],[800,820],[941,790],[1100,745],[1200,700],[1340,660],[1400,600],[1450,530],[1500,492]],
    [[258,1080],[350,1092],[420,1108],[600,1118],[740,1115],[810,1130],[900,1150],[1050,1185],[1200,1215],[1375,1255]],
    '#2d6aa8');
  out += ribbon(
    [[10,995],[100,978],[200,958],[350,940],[500,925],[650,905],[800,860],[941,822],[1230,732],[1340,690],[1420,620],[1500,570]],
    [[258,1132],[400,1140],[560,1150],[750,1145],[850,1155],[1000,1185],[1200,1220],[1375,1245]],
    [[10,1005],[100,990],[200,970],[350,960],[500,945],[650,925],[800,880],[941,848],[1200,760],[1340,730],[1400,690],[1470,630]],
    [[258,1170],[400,1182],[600,1178],[750,1175],[850,1185],[1000,1210],[1200,1235],[1375,1255]],
    '#b62e8f');

  // the black block the indicator paints over the lower part
  out += `<rect x="540" y="644" width="1079" height="119" fill="#000"/>`;

  // annotations of the price pane
  out += `<path d="M1233 629.5 H1711" stroke="#999"/>`;
  out += text(888, 322, '20.54 - 15.88', '#c8c8c8', 18);
  out += text(1235, 616, '13.29 - 13.28', '#c8c8c8', 18);
  out += text(838, 106, '26.30', '#c8c8c8', 18);
  out += `<path d="M817 108 V97 M817 99 q4 -2 7 2 q3 3 7 2" fill="none" stroke="#bbb" stroke-width="1.2"/>`;
  out += `<path d="M828 108 V118" stroke="#00c000" stroke-width="2"/><path d="M822 118 H834 L828 127Z" fill="#00d000"/>`;

  // small event tags
  [[737,'财','#1d4f96'],[816,'防','#9a5010'],[1086,'减','#108a20']].forEach(t => {
    out += `<rect x="${t[0] - 8}" y="750" width="16" height="13" fill="${t[2]}"/>`;
    out += text(t[0], 756.5, t[1], '#e8e8e8', 12, 'middle');
  });
  out += `<text x="891" y="762" fill="#ff2020" font-size="16" font-weight="700" text-anchor="middle">S</text>`;

  // title row
  out += text(3, 82, '方直科技(日线)', '#c0c0c0', 18);
  out += `<circle cx="143.5" cy="83" r="8" fill="#777"/><path d="M139.5 81.5 L143.5 85.5 L147.5 81.5" fill="none" stroke="#222" stroke-width="1.5"/>`;
  out += text(158, 82, '牛熊先知1', '#c0c0c0', 18);
  out += `<path d="M1668 76 L1675 83 L1668 90 L1661 83Z" fill="none" stroke="#666"/>`;
  out += `<rect x="1688.5" y="74.5" width="15" height="16" rx="2" fill="#222" stroke="#888"/><rect x="1696" y="77" width="5" height="11" fill="#888"/>`;

  // pane axes
  out += `<path d="M1711 67 V1305" stroke="${AX}" stroke-width="2"/>`;
  out += `<path d="M0 764 H1787" stroke="#c00000" stroke-width="2"/>`;
  out += `<path d="M0 1282.5 H1787 M0 1304.5 H1787" stroke="${AX}" stroke-width="1.5"/>`;
  out += `<path d="M.5 67 V1305" stroke="#333"/>`;
  for (let p = 12; p <= 26; p++) {
    const y = priceY(p);
    out += `<path d="M1711 ${y} H1718" stroke="${AX}"/>`;
    out += text(1778, y + 1.5, p.toFixed(2), '#e02828', 18, 'end');
  }

  // volume pane
  const volY = k => 1273 - k * 45.1;
  for (let k = 1; k <= 10; k++) {
    out += `<path d="M0 ${volY(k)} H1711" stroke="${DOT}" stroke-dasharray="2 4"/>`;
    out += `<path d="M1711 ${volY(k)} H1718 M1711 ${volY(k) + 22.5} H1715" stroke="${AX}"/>`;
    out += text(1778, volY(k) + 2, String(k * 5000), '#e02828', 18, 'end');
  }
  // bar tops, positive = red outline, negative = filled cyan
  const bars = [1363,1282,1183,981,958,944,-818,-1007,-1222,1219,-1196,-1340,1367,-1340,1367,-1385,1417,-1403,-1430,1332,
    1287,1340,-1385,-1385,1332,1350,665,738,-858,-809,531,-687,-696,683,-764,-966,-912,958,-944,1115,
    -1218,1133,1098,-1151,-1222,472,-597,913,1035,773,800,-1092,1075,904,1080,-1042,1169,675,756,-885,
    746,597,597,418,-701,-768,-696,-804,-912,-750,790,584,246,-710,-683,-908,-719,616,458,102,
    -579,702,-872,1129,-1056,958,-1074,990,422,688,-453,-795,1048,994,813,-858,-1115,1332,-1187,1305,
    1309,-1264,-1309,-1287,1373,-1322,-1412,-1403,-1340,1340,1268,-1390,-1408,1391,-1322,1386,1413,1413,-1408,-1408,
    1436,1427,-1349,-1390,-1426,1345,1373,972,-1227,-1304];
  bars.forEach((v, i) => {
    const x = Math.round(barX(i)), top = z10(Math.abs(v));
    if (v > 0) out += `<rect x="${x - 4}" y="${top}" width="9" height="${1273 - top}" fill="#000" stroke="${RED}" stroke-width="1.4"/>`;
    else out += `<rect x="${x - 5}" y="${top}" width="11" height="${1273 - top}" fill="${CYAN}"/>`;
  });

  function maLine(leftPts, rightPts, col, w) {
    const pts = leftPts.map(p => [p[0] * 900 / 1568, z10(p[1])]).concat(rightPts.map(p => [880 + p[0] * 900 / 1568, z10(p[1])]));
    return `<polyline points="${pts.map(p => p[0].toFixed(1) + ',' + p[1].toFixed(1)).join(' ')}" fill="none" stroke="${col}" stroke-width="${w}"/>`;
  }
  out += maLine(
    [[11,1347],[32,1330],[56,1310],[78,1210],[100,1130],[124,1060],[145,965],[168,940],[190,990],[213,1040],[234,1095],[257,1190],[280,1268],[302,1290],[325,1325],[346,1358],[369,1375],[391,1385],[414,1405],[437,1398],[458,1373],[481,1358],[503,1353],[526,1345],[547,1345],[571,1358],[594,1250],[615,1095],[639,975],[660,860],[683,720],[704,724],[727,720],[751,685],[772,675],[795,760],[817,810],[840,865],[861,910],[884,985],[907,1030],[929,1075],[952,1100],[973,1150],[997,1165],[1018,1040],[1041,905],[1064,870],[1086,852],[1108,762],[1130,830],[1154,925],[1175,958],[1198,930],[1221,1000],[1243,1045],[1266,1058],[1287,970],[1310,945],[1331,905],[1354,855],[1379,725],[1399,715],[1423,640],[1444,612],[1467,617],[1488,640],[1511,680],[1534,778]],
    [[0,775],[23,788],[45,793],[68,770],[90,660],[113,615],[135,603],[158,625],[180,655],[203,730],[224,670],[248,570],[269,495],[292,490],[315,545],[337,700],[360,870],[381,950],[404,1015],[426,1045],[449,915],[472,820],[494,720],[517,670],[538,685],[561,795],[583,820],[606,900],[628,965],[651,1020],[674,1062],[695,1160],[718,1250],[739,1278],[763,1278],[786,1295],[807,1310],[831,1310],[851,1340],[875,1358],[896,1367],[919,1364],[943,1356],[964,1350],[987,1352],[1008,1360],[1031,1358],[1053,1380],[1076,1387],[1099,1387],[1121,1387],[1144,1403],[1165,1418],[1188,1418],[1210,1405],[1233,1405],[1256,1408],[1277,1387],[1300,1375],[1322,1295],[1345,1270],[1362,1250]],
    '#e8e8e8', 1.2);
  out += maLine(
    [[11,1403],[32,1380],[56,1360],[78,1300],[100,1240],[124,1190],[145,1150],[168,1122],[190,1112],[213,1098],[234,1080],[257,1087],[280,1105],[302,1145],[325,1185],[346,1235],[369,1290],[391,1330],[414,1345],[437,1358],[458,1367],[481,1367],[503,1367],[526,1372],[547,1372],[571,1365],[594,1295],[615,1220],[639,1165],[660,1085],[683,1030],[704,950],[727,880],[751,810],[772,770],[795,745],[817,770],[840,788],[861,797],[884,825],[907,890],[929,940],[952,985],[973,1030],[997,1070],[1018,1020],[1041,992],[1064,986],[1086,993],[1108,960],[1130,922],[1154,917],[1175,912],[1198,890],[1221,878],[1243,935],[1266,990],[1287,965],[1310,940],[1331,950],[1354,945],[1379,885],[1399,830],[1423,780],[1444,755],[1467,730],[1488,685],[1511,695],[1534,710]],
    [[0,708],[23,702],[45,702],[68,702],[90,668],[113,697],[135,692],[158,710],[180,711],[203,693],[224,650],[248,580],[269,562],[292,575],[315,635],[337,685],[360,715],[381,720],[404,750],[426,792],[449,787],[472,843],[494,838],[517,850],[538,865],[561,850],[583,822],[606,814],[628,819],[651,858],[674,930],[695,1000],[718,1085],[739,1128],[763,1148],[786,1178],[807,1230],[831,1280],[851,1310],[875,1318],[896,1332],[919,1338],[943,1333],[964,1348],[987,1355],[1008,1362],[1031,1358],[1053,1367],[1076,1368],[1099,1368],[1121,1375],[1144,1385],[1165,1400],[1188,1400],[1210,1395],[1233,1395],[1256,1404],[1277,1404],[1300,1398],[1322,1355],[1345,1340],[1362,1328]],
    '#d8d800', 1.4);

  // volume legend
  out += `<circle cx="11" cy="777" r="8" fill="#777"/><path d="M7 775.5 L11 779.5 L15 775.5" fill="none" stroke="#222" stroke-width="1.5"/>`;
  out += `<text x="27" y="777" fill="#c8c8c8" font-size="18" dominant-baseline="central" textLength="161" lengthAdjust="spacing">VOLUME: 85968.50</text>`;
  out += `<path d="M194 767 V785" stroke="${CYAN}" stroke-width="1.2"/><path d="M190.5 782 H197.5 L194 788Z" fill="${CYAN}"/>`;
  out += `<text x="211" y="777" fill="#c8c8c8" font-size="18" dominant-baseline="central" textLength="131" lengthAdjust="spacing">MA5: 108526.15</text>`;
  out += `<path d="M349 771 V789" stroke="#f03030" stroke-width="1.2"/><path d="M345.5 773 H352.5 L349 766Z" fill="#f03030"/>`;
  out += `<text x="365" y="777" fill="#e8e800" font-size="18" dominant-baseline="central" textLength="130" lengthAdjust="spacing">MA10: 78521.66</text>`;
  out += `<path d="M503 771 V789" stroke="#f03030" stroke-width="1.2"/><path d="M499.5 773 H506.5 L503 766Z" fill="#f03030"/>`;

  // X10 box and period name
  out += `<path d="M1712 1279.5 H1749 V1260" fill="none" stroke="${AX}"/>`;
  out += text(1730, 1271, 'X10', '#d02828', 17, 'middle');
  out += text(1748, 1295, '日线', '#c0c0c0', 18, 'middle');

  // date axis
  [[250,'3'],[545,'4'],[1046,'6'],[1302,'7'],[1572,'8']].forEach(d => {
    out += `<path d="M${d[0]} 1283 V1305" stroke="${AX}"/>`;
    out += text(d[0] + 3, 1295, d[1], '#d82828', 18);
  });
  out += text(7, 1295, '2023年', '#d82828', 18);
  [324,472,606,668,854,981,1109,1175,1238,1369,1438,1505,1638].forEach(x => { out += `<path d="M${x} 1283 V1287" stroke="${AX}"/>`; });
  out += `<rect x="707.5" y="1283.5" width="116" height="21" fill="#000090" stroke="#b00020"/>`;
  out += `<text x="709" y="1295" fill="#c8c8c8" font-size="18" dominant-baseline="central" textLength="112" lengthAdjust="spacing">2023/04/21/五</text>`;

  svgEl.innerHTML = out;
</script>
<script src="https://cdn.jsdelivr.net/npm/bootstrap@5.3.0/dist/js/bootstrap.bundle.min.js"></script>
</body>
</html>
